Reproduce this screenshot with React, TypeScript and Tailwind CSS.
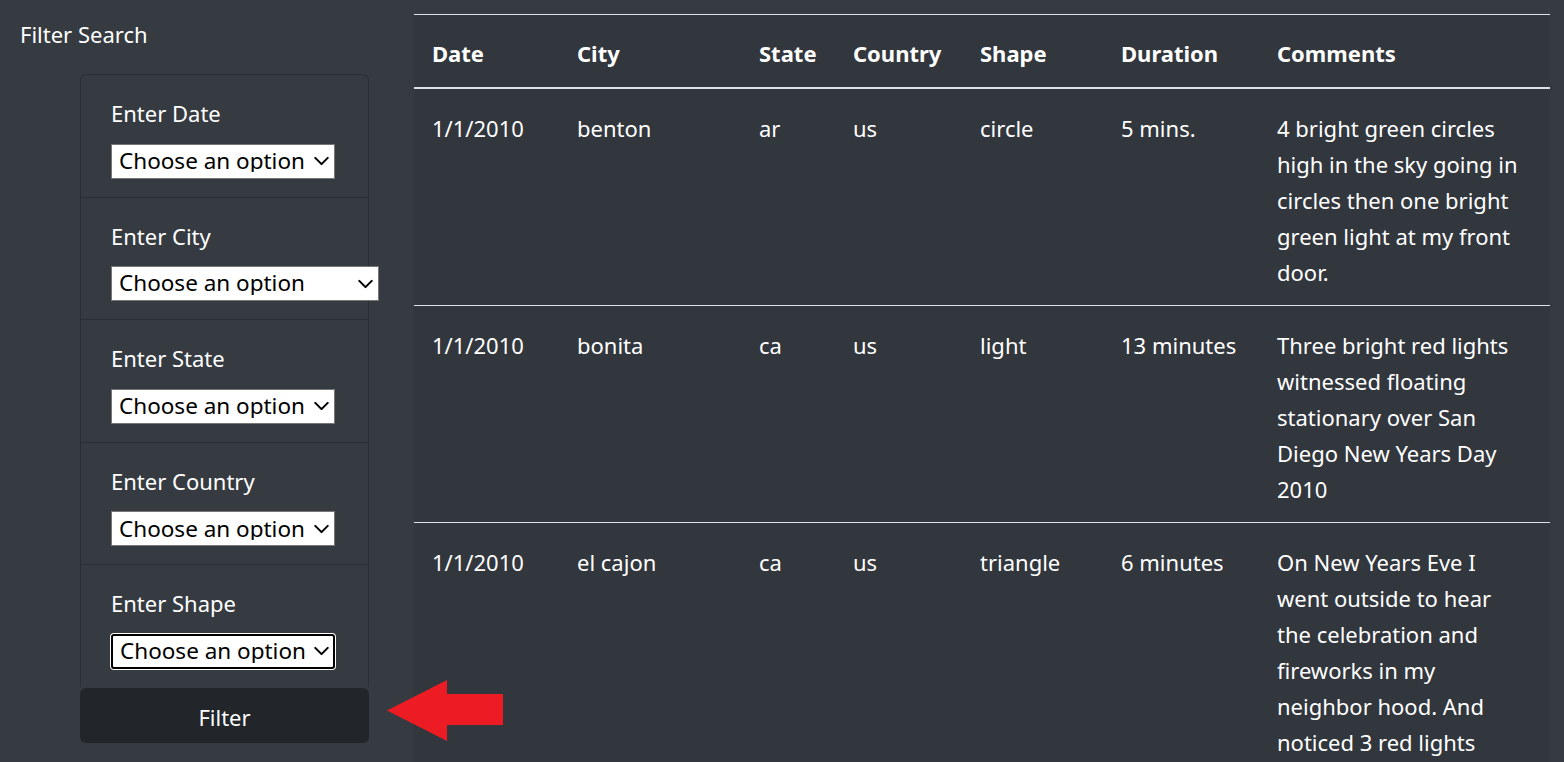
import { ChevronDown } from 'lucide-react'

// ── Data ──────────────────────────────────────────────────────────────────────

const filters = [
  { label: 'Enter Date', width: 'w-[224px]' },
  { label: 'Enter City', width: 'w-[268px]' },
  { label: 'Enter State', width: 'w-[224px]' },
  { label: 'Enter Country', width: 'w-[224px]' },
  { label: 'Enter Shape', width: 'w-[224px]', focused: true },
]

const columns = [
  { title: 'Date', width: 'w-[145px]' },
  { title: 'City', width: 'w-[182px]' },
  { title: 'State', width: 'w-[94px]' },
  { title: 'Country', width: 'w-[127px]' },
  { title: 'Shape', width: 'w-[141px]' },
  { title: 'Duration', width: 'w-[156px]' },
  { title: 'Comments', width: 'w-[291px]' },
]

const sightings = [
  {
    date: '1/1/2010',
    city: 'benton',
    state: 'ar',
    country: 'us',
    shape: 'circle',
    duration: '5 mins.',
    comments: [
      '4 bright green circles',
      'high in the sky going in',
      'circles then one bright',
      'green light at my front',
      'door.',
    ],
  },
  {
    date: '1/1/2010',
    city: 'bonita',
    state: 'ca',
    country: 'us',
    shape: 'light',
    duration: '13 minutes',
    comments: [
      'Three bright red lights',
      'witnessed floating',
      'stationary over San',
      'Diego New Years Day',
      '2010',
    ],
  },
  {
    date: '1/1/2010',
    city: 'el cajon',
    state: 'ca',
    country: 'us',
    shape: 'triangle',
    duration: '6 minutes',
    comments: [
      'On New Years Eve I',
      'went outside to hear',
      'the celebration and',
      'fireworks in my',
      'neighbor hood. And',
      'noticed 3 red lights',
    ],
  },
]

// ── Filter sidebar ───────────────────────────────────────────────────────────

function FilterSelect({ width, focused }: { width: string; focused?: boolean }) {
  return (
    <div className={`relative h-[35px] ${width}`}>
      <select
        className={`h-full w-full appearance-none bg-white pl-[7px] pr-6 text-[22.5px] leading-none text-black outline-none ${
          focused
            ? 'rounded-[3px] border-2 border-black ring-1 ring-white'
            : 'border border-[#767676]'
        }`}
        defaultValue=""
      >
        <option value="">Choose an option</option>
      </select>
      <ChevronDown
        className="pointer-events-none absolute right-[1px] top-1/2 h-[25px] w-[25px] -translate-y-1/2 text-black"
        strokeWidth={2}
      />
    </div>
  )
}

function Sidebar() {
  return (
    <aside className="w-[414px] shrink-0 pl-5 pt-4">
      <h2 className="text-[22px] leading-[36px]">Filter Search</h2>
      <div className="ml-[60px] mt-[22px] w-[289px]">
        <ul className="rounded-t-[6px] border border-b-0 border-black/20">
          {filters.map((f, i) => (
            <li
              key={f.label}
              className={`px-[30px] pb-[18px] pt-[20px] ${i > 0 ? 'border-t border-black/20' : ''}`}
            >
              <label className="mb-[12.6px] block text-[22px] leading-[36px]">{f.label}</label>
              <FilterSelect width={f.width} focused={f.focused} />
            </li>
          ))}
        </ul>
        <button className="mt-px h-[55px] w-full rounded-[6px] bg-[#222529] pt-1 text-[22px] text-white">
          Filter
        </button>
      </div>
    </aside>
  )
}

// ── Results table ────────────────────────────────────────────────────────────

function ResultsTable() {
  return (
    <div className="w-[1136px] shrink-0 pt-[14px]">
      <table className="w-full table-fixed border-collapse bg-[#32363d] text-[22px] leading-[36px]">
        <thead>
          <tr className="border-t border-b-2 border-[#dee2e6]">
            {columns.map((c) => (
              <th key={c.title} className={`${c.width} px-[18px] pb-[16px] pt-[20px] text-left font-bold`}>
                {c.title}
              </th>
            ))}
          </tr>
        </thead>
        <tbody>
          {sightings.map((s) => (
            <tr key={s.city} className="border-t border-[#dee2e6] align-top">
              <td className="px-[18px] pb-[15px] pt-[21px]">{s.date}</td>
              <td className="px-[18px] pb-[15px] pt-[21px]">{s.city}</td>
              <td className="px-[18px] pb-[15px] pt-[21px]">{s.state}</td>
              <td className="px-[18px] pb-[15px] pt-[21px]">{s.country}</td>
              <td className="px-[18px] pb-[15px] pt-[21px]">{s.shape}</td>
              <td className="px-[18px] pb-[15px] pt-[21px]">{s.duration}</td>
              <td className="px-[18px] pb-[15px] pt-[21px]">
                {s.comments.map((line) => (
                  <span key={line} className="block whitespace-nowrap">
                    {line}
                  </span>
                ))}
              </td>
            </tr>
          ))}
        </tbody>
      </table>
    </div>
  )
}

// ── Page ─────────────────────────────────────────────────────────────────────

export default function App() {
  return (
    <div
      className="relative flex h-[762px] overflow-hidden bg-[#363a41] text-white"
      style={{ fontFamily: '"Noto Sans", "Open Sans", sans-serif' }}
    >
      <Sidebar />
      <ResultsTable />

      {/* Red annotation arrow */}
      <svg
        className="absolute left-[387px] top-[680px]"
        width="117"
        height="61"
        viewBox="0 0 117 61"
      >
        <polygon
          points="0,30.5 60,0 60,14 116,14 116,45 60,45 60,61"
          fill="#ed1c24"
        />
      </svg>
    </div>
  )
}
